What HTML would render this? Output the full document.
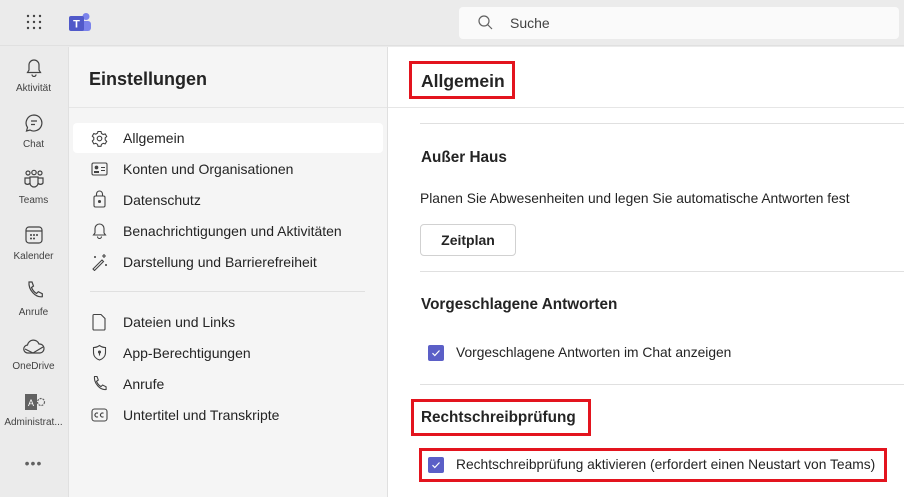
<!DOCTYPE html>
<html><head><meta charset="utf-8"><style>
*{margin:0;padding:0;box-sizing:border-box}
body{width:904px;height:497px;overflow:hidden;background:#ebebeb;font-family:"Liberation Sans",sans-serif;color:#242424;position:relative}
.a{position:absolute}
.top{left:0;top:0;width:904px;height:46px;background:#ebebeb;border-bottom:1px solid #e0e0e0}
.search{left:459px;top:7px;width:440px;height:32px;background:#fafafa;border-radius:4px}
.rail{left:0;top:47px;width:67px;height:450px;background:#ebebeb}
.rl{width:67px;text-align:center;font-size:10px;color:#424242;left:0}
.panel{left:68px;top:47px;width:319px;height:450px;background:#f5f5f5;border-left:1px solid #e0e0e0}
.main{left:387px;top:47px;width:517px;height:450px;background:#fff;border-left:1px solid #e0e0e0}
.nav{left:123px;font-size:14px;line-height:18px;color:#242424}
.ic{left:91px}
.h{font-weight:bold;font-size:15.3px}
.t{font-size:13.8px}
.cb{width:16px;height:16px;background:#5b5fc7;border-radius:2px}
.line{height:1px;background:#e0e0e0}
.red{border:3px solid #e3141e}
svg{display:block}
</style></head><body>
<div class="a top"></div>
<svg class="a" style="left:26px;top:14px" width="16" height="16"><g fill="#424242"><circle cx="2" cy="2" r="1.2"/><circle cx="8" cy="2" r="1.2"/><circle cx="14" cy="2" r="1.2"/><circle cx="2" cy="8" r="1.2"/><circle cx="8" cy="8" r="1.2"/><circle cx="14" cy="8" r="1.2"/><circle cx="2" cy="14" r="1.2"/><circle cx="8" cy="14" r="1.2"/><circle cx="14" cy="14" r="1.2"/></g></svg>
<svg class="a" style="left:68px;top:12px" width="24" height="22"><circle cx="18" cy="4.5" r="3.5" fill="#7b83eb"/><rect x="12" y="9" width="11" height="10" rx="3" fill="#7b83eb"/><rect x="1" y="4" width="15" height="15" rx="2" fill="#5059c9"/><text x="8.5" y="15.5" font-size="11" font-weight="bold" fill="#fff" text-anchor="middle" font-family="Liberation Sans">T</text></svg>
<div class="a search"></div>
<svg class="a" style="left:477px;top:14px" width="16" height="16"><circle cx="7" cy="7" r="5" fill="none" stroke="#616161" stroke-width="1.2"/><path d="M10.5 10.5L15 15" stroke="#616161" stroke-width="1.2"/></svg>
<div class="a" style="left:510px;top:15px;font-size:14px;color:#424242">Suche</div>

<div class="a rail"></div>
<svg class="a" style="left:25px;top:57px" width="18" height="20" fill="none" stroke="#424242" stroke-width="1.2"><path d="M4 13V8a5 5 0 0 1 10 0v5l1.5 2.5h-13z"/><path d="M7 17.5a2 2 0 0 0 4 0"/></svg>
<div class="a rl" style="top:83px">Aktivität</div>
<svg class="a" style="left:24px;top:113px" width="20" height="20" fill="none" stroke="#424242" stroke-width="1.2"><path d="M10 2a8 8 0 1 1-4 15l-3.5 1 1-3.5A8 8 0 0 1 10 2z"/><path d="M7 8h6M7 11.5h4"/></svg>
<div class="a rl" style="top:139px">Chat</div>
<svg class="a" style="left:23px;top:169px" width="22" height="20" fill="none" stroke="#424242" stroke-width="1.2"><circle cx="5" cy="4" r="2"/><circle cx="11" cy="3.5" r="2.2"/><circle cx="17" cy="4" r="2"/><path d="M2 9h5v5a3 3 0 0 1-5 0zM15 9h5v5a3 3 0 0 1-5 0zM7 8h8v6a4 4 0 0 1-8 0z"/></svg>
<div class="a rl" style="top:195px">Teams</div>
<svg class="a" style="left:25px;top:226px" width="18" height="18" fill="none" stroke="#424242" stroke-width="1.2"><rect x="1" y="1" width="16" height="16" rx="3"/><path d="M1 5h16"/><g fill="#424242" stroke="none"><circle cx="6" cy="9" r="1"/><circle cx="9" cy="9" r="1"/><circle cx="12" cy="9" r="1"/><circle cx="6" cy="12.5" r="1"/><circle cx="9" cy="12.5" r="1"/></g></svg>
<div class="a rl" style="top:251px">Kalender</div>
<svg class="a" style="left:25px;top:280px" width="18" height="20" fill="none" stroke="#424242" stroke-width="1.2"><path d="M4 2l3 0 1.5 4-2 1.5c1 2.5 2.5 4.5 5 6l1.8-1.8 4 2v3c-7 1-14-7-13.3-14.7z"/></svg>
<div class="a rl" style="top:307px">Anrufe</div>
<svg class="a" style="left:23px;top:339px" width="22" height="16" fill="none" stroke="#424242" stroke-width="1.2"><path d="M5 14a4 4 0 0 1-.5-8A6 6 0 0 1 16 5a4.5 4.5 0 0 1 1 9z"/><path d="M2 10l8 4 10-6"/></svg>
<div class="a rl" style="top:361px">OneDrive</div>
<svg class="a" style="left:24px;top:392px" width="22" height="20"><rect x="1" y="2" width="12" height="16" fill="#616161"/><text x="7" y="14" font-size="9" fill="#fff" text-anchor="middle" font-family="Liberation Sans">A</text><circle cx="17" cy="10" r="3.5" fill="none" stroke="#616161" stroke-width="1.2" stroke-dasharray="2 1"/></svg>
<div class="a rl" style="top:417px">Administrat...</div>
<div class="a rl" style="top:455px;font-size:14px;letter-spacing:1px;color:#616161">•••</div>

<div class="a panel"></div>
<div class="a" style="left:89px;top:69px;font-size:18px;font-weight:bold">Einstellungen</div>
<div class="a line" style="left:69px;top:107px;width:318px;background:#e6e6e6"></div>
<div class="a" style="left:73px;top:123px;width:310px;height:30px;background:#fff;border-radius:4px"></div>
<svg class="a ic" style="top:130px" width="17" height="17" fill="none" stroke="#424242" stroke-width="1.1"><circle cx="8.5" cy="8.5" r="2.3"/><path d="M7 1.5h3l.5 2 1.7 1 2-.6 1.5 2.6-1.5 1.4v2l1.5 1.4-1.5 2.6-2-.6-1.7 1-.5 2H7l-.5-2-1.7-1-2 .6L1.3 11l1.5-1.4v-2L1.3 6.1l1.5-2.6 2 .6 1.7-1z"/></svg>
<div class="a nav" style="top:129px">Allgemein</div>
<svg class="a ic" style="top:162px" width="17" height="14" fill="none" stroke="#424242" stroke-width="1.1"><rect x="1" y="1" width="15" height="12" rx="1.5"/><circle cx="5.5" cy="5.5" r="1.3" fill="#424242"/><path d="M3 10h5" stroke-width="2"/><path d="M10 5.5h4M10 8.5h4"/></svg>
<div class="a nav" style="top:160px">Konten und Organisationen</div>
<svg class="a ic" style="top:190px" width="17" height="18" fill="none" stroke="#424242" stroke-width="1.1"><path d="M5.5 6V4a3 3 0 0 1 6 0v2"/><rect x="3" y="6" width="11" height="11" rx="1.5"/><circle cx="8.5" cy="11.5" r="1" fill="#424242"/></svg>
<div class="a nav" style="top:191px">Datenschutz</div>
<svg class="a ic" style="top:221px" width="17" height="18" fill="none" stroke="#424242" stroke-width="1.1"><path d="M4 12V7.5a4.5 4.5 0 0 1 9 0V12l1.5 2h-12z"/><path d="M6.5 15.5a2 2 0 0 0 4 0"/></svg>
<div class="a nav" style="top:222px">Benachrichtigungen und Aktivitäten</div>
<svg class="a ic" style="top:253px" width="17" height="18" fill="none" stroke="#424242" stroke-width="1.1"><path d="M2 16l9-9 1.5 1.5-9 9z"/><path d="M13 1v4M11 3h4M4 3v2M3 4h2M15 11v2M14 12h2"/></svg>
<div class="a nav" style="top:253px">Darstellung und Barrierefreiheit</div>
<div class="a line" style="left:90px;top:291px;width:275px;background:#e0e0e0"></div>
<svg class="a ic" style="top:313px" width="17" height="18" fill="none" stroke="#424242" stroke-width="1.1"><path d="M3 1.5h7l4 4v10.5a1 1 0 0 1-1 1H3a1 1 0 0 1-1-1v-13.5a1 1 0 0 1 1-1z"/></svg>
<div class="a nav" style="top:313px">Dateien und Links</div>
<svg class="a ic" style="top:344px" width="17" height="18" fill="none" stroke="#424242" stroke-width="1.1"><path d="M8.5 1.5c2 1.5 4 2 6 2v5c0 4-3 6.5-6 7.5-3-1-6-3.5-6-7.5v-5c2 0 4-.5 6-2z"/><circle cx="8.5" cy="8" r="1" fill="#424242"/><path d="M8.5 9v2.5"/></svg>
<div class="a nav" style="top:344px">App-Berechtigungen</div>
<svg class="a ic" style="top:375px" width="17" height="18" fill="none" stroke="#424242" stroke-width="1.1"><path d="M3.5 1.5h2.5l1.3 3.5-1.8 1.3c.9 2.2 2.2 4 4.5 5.3l1.6-1.6 3.5 1.8v2.7c-6 .9-12.3-6.2-11.6-13z"/></svg>
<div class="a nav" style="top:375px">Anrufe</div>
<svg class="a ic" style="top:408px" width="17" height="14" fill="none" stroke="#424242" stroke-width="1.1"><rect x="1" y="1" width="15" height="12" rx="2.5"/><path d="M7 5.3a2 2 0 1 0 0 3.4M12.5 5.3a2 2 0 1 0 0 3.4"/></svg>
<div class="a nav" style="top:406px">Untertitel und Transkripte</div>

<div class="a main"></div>
<div class="a red" style="left:409px;top:61px;width:106px;height:38px"></div>
<div class="a" style="left:421px;top:71px;font-size:17.5px;font-weight:bold">Allgemein</div>
<div class="a line" style="left:388px;top:107px;width:516px;background:#e6e6e6"></div>
<div class="a line" style="left:420px;top:123px;width:484px"></div>
<div class="a h" style="left:421px;top:149px">Außer Haus</div>
<div class="a t" style="left:420px;top:191px">Planen Sie Abwesenheiten und legen Sie automatische Antworten fest</div>
<div class="a" style="left:420px;top:224px;width:96px;height:32px;border:1px solid #d1d1d1;border-radius:4px;font-size:14px;font-weight:bold;text-align:center;line-height:30px">Zeitplan</div>
<div class="a line" style="left:420px;top:271px;width:484px"></div>
<div class="a h" style="left:421px;top:296px">Vorgeschlagene Antworten</div>
<div class="a cb" style="left:428px;top:345px"></div>
<svg class="a" style="left:431px;top:348px" width="10" height="10"><path d="M1.5 5.2l2.3 2.3L8.5 2.5" fill="none" stroke="#fff" stroke-width="1.2"/></svg>
<div class="a t" style="left:456px;top:345px">Vorgeschlagene Antworten im Chat anzeigen</div>
<div class="a line" style="left:420px;top:384px;width:484px"></div>
<div class="a red" style="left:411px;top:399px;width:180px;height:37px"></div>
<div class="a h" style="left:421px;top:409px">Rechtschreibprüfung</div>
<div class="a red" style="left:419px;top:448px;width:468px;height:34px"></div>
<div class="a cb" style="left:428px;top:457px"></div>
<svg class="a" style="left:431px;top:460px" width="10" height="10"><path d="M1.5 5.2l2.3 2.3L8.5 2.5" fill="none" stroke="#fff" stroke-width="1.2"/></svg>
<div class="a t" style="left:456px;top:457px">Rechtschreibprüfung aktivieren (erfordert einen Neustart von Teams)</div>
</body></html>
